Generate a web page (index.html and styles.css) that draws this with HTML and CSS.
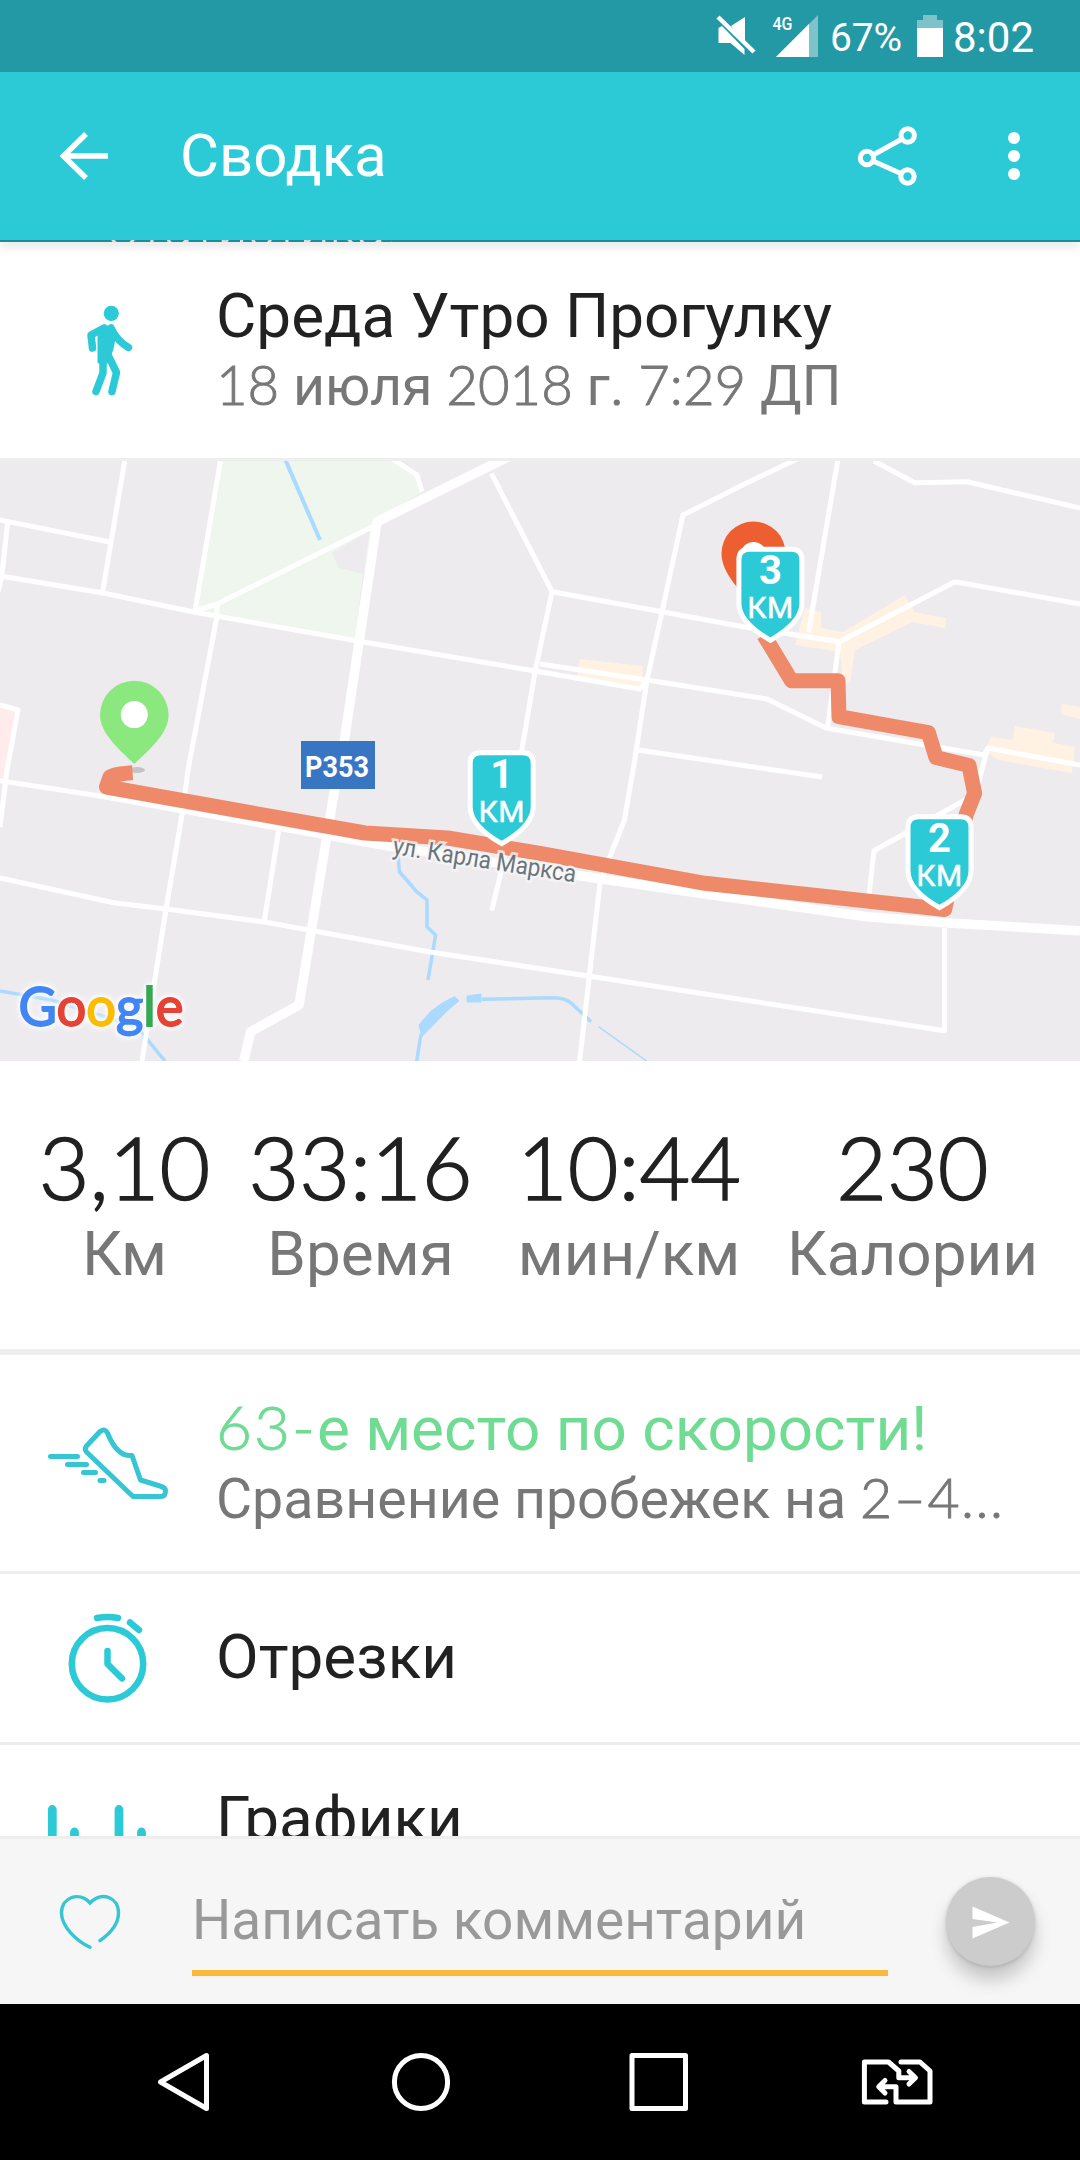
FILE: index.html
```html
<!DOCTYPE html>
<html lang="ru">
<head>
  <meta charset="utf-8">
  <title>Сводка</title>
  <link rel="stylesheet" href="styles.css">
</head>
<body>
  <div class="screen">

    <div class="status-bar">
      <svg class="status-icons" width="112" height="72" viewBox="712 0 112 72">
        <path d="M718.500 28v15h12l14 12v-6L722 26zM731 26l14-9v27z" fill="#fff"/>
        <path d="M718 17l36 35" stroke="#fff" stroke-width="4.500"/>
        <path d="M776 57l42-42v42z" fill="#7ec3ca"/>
        <path d="M776 57l33-33v33z" fill="#fff"/>
        <text class="net" x="772.500" y="30" textLength="20" lengthAdjust="spacingAndGlyphs">4G</text>
      </svg>
      <span class="percent">67%</span>
      <svg class="battery" width="26" height="72" viewBox="917 0 26 72">
        <path d="M923 15h14v5h6v37h-26V20h6z" fill="#7ec3ca"/>
        <path d="M917 28h26v29h-26z" fill="#fff"/>
      </svg>
      <span class="time">8:02</span>
    </div>

    <div class="app-bar">
      <svg class="back" width="180" height="168" viewBox="0 72 180 168">
        <path d="M108 156H64M86 134L63.500 156L86 178" fill="none" stroke="#fff" stroke-width="5.500"/>
      </svg>
      <h1>Сводка</h1>
      <svg width="240" height="168" viewBox="840 72 240 168" fill="none" stroke="#fff" stroke-width="5">
        <circle cx="907.700" cy="135.500" r="6.700"/>
        <circle cx="867" cy="158" r="6.700"/>
        <circle cx="907.500" cy="176.500" r="6.700"/>
        <path d="M873 155l29-16M873 161l29 13"/>
        <g fill="#fff" stroke="none">
          <circle cx="1014" cy="138" r="6"/>
          <circle cx="1014" cy="156" r="6"/>
          <circle cx="1014" cy="174" r="6"/>
        </g>
      </svg>
    </div>

    <div class="content">
      <div class="banner"><span>Статистика!</span></div>

      <div class="row activity">
        <svg width="216" height="216" viewBox="0 242 216 216" fill="none" stroke="#2ccad7" stroke-linecap="round" stroke-linejoin="round">
          <circle cx="111.300" cy="313.300" r="7.600" fill="#2ccad7" stroke="none"/>
          <path d="M99 333.500Q102 327 107 327Q112 327 115 333L112 349L107 362H99z" fill="#2ccad7" stroke-width="3"/>
          <path d="M104 328L91 335L92.500 348" stroke-width="7.500"/>
          <path d="M111 328Q117 341 128.500 347.500" stroke-width="7.500"/>
          <path d="M103 354V373L96 391.500M107 353L116.500 372.500L112 391.500" stroke-width="7.500"/>
        </svg>
        <div class="row-text">
          <div class="title">Среда Утро Прогулку</div>
          <div class="sub date"><span class="num">18</span> июля <span class="num">2018</span> г. <span class="num">7:29</span> ДП</div>
        </div>
      </div>

      <svg class="map" width="1080" height="600" viewBox="0 461 1080 600">
        <rect x="0" y="461" width="1080" height="600" fill="#edebee"/>
        <!-- парк и кварталы -->
        <path d="M220 461H393L417 475L422 492L374 522L363 572L355 640L195 612z" fill="#eef6ee"/>
        <path d="M332 553L370 530L363 574L339 568z" fill="#edebee"/>
        <path d="M0 705L18 710L9 765L0 785z" fill="#ffebeb"/>
        <g fill="#fff2e3">
          <path d="M580 659L643 666L641 689L577 676z"/>
          <path d="M805 608L821 612V628L843 632L905 595L914 612L946 618L945 628L912 622L855 650L850 683L843 683L840 652L795 645z"/>
          <path d="M991 737L1013 740L1015 726L1055 733L1053 743L1075 747L1072 773L998 760L985 750z"/>
          <path d="M1062 704L1080 707V719L1061 714z"/>
        </g>
        <!-- вода -->
        <g class="water">
          <path d="M285 459L320 540" stroke-width="4"/>
          <path d="M398 855L399.400 871.700L416.700 891.700L427 900V926.700L435.600 935L428 980"/>
          <path d="M421 1034L416.700 1061M482 999.300L540 998L554 997.700Q565 998 571 1003L591 1021.700"/>
          <path d="M598.500 1026.700L646.700 1061" stroke-width="1.500"/>
          <path d="M0 991L52 1000L137 1027L165 1061"/>
          <path d="M454.500 996.700L459 1000.700L447 1011L421.800 1036.700L419 1025L430.400 1011.700Q442 1002 454.500 996.700zM467 996L481 994V1002H467z" fill="#aadaff" stroke="#aadaff" stroke-width="1"/>
        </g>
        <!-- улицы -->
        <g class="roads">
          <path d="M124.700 461L102.600 592M0 520L108.500 541.700M7.600 523L1.700 577L-2 592"/>
          <path d="M0 576L103 593L195 612.300L365 642.300L535 671L640 689L647 680"/>
          <path d="M540 664L647 680L767 699L826 728L984 755L988 748L1080 765"/>
          <path d="M220.400 461L195 611L217 604L372 527M217 605V616L188 770L182.500 812L166 909L142 1061"/>
          <path d="M392.600 459L417 475L422 491.700M491.400 473.300L552 591.700L535 672L502 868L491.700 910.700"/>
          <path d="M552 591.700L662 611.700L743 626.700L839.600 641.700L955 581.700L1080 604"/>
          <path d="M797 459L746.600 483L683 515L662 611.700L647 680L634.700 760L624.400 820L610.600 855L600 883L579.600 1061"/>
          <path d="M838 459L808.600 632M874 461L914.700 482.700L967 481.700L1080 508M839 642L827.500 728M638 750L822 777"/>
          <path d="M987.700 748L975 795L962 801.700L874 850.700L869 895"/>
          <path d="M0 705L18 710L7 770L0 827M279 828L264.500 920"/>
          <path d="M0 878L113.600 902.700L166 909L264.500 922L430 952L588 976L944.600 1030.700V928"/>
          <path d="M0 780.700L100 796L182.500 811L327 837"/>
          <path d="M327 835L389 846L574.400 875L712 895L867 916.700L944.600 922.700L1080 930.700" stroke-width="9.500"/>
          <path d="M508 457L377 521.700L344.400 740L334 793L299 1005L250.700 1031.700L243.800 1061" stroke-width="9.500"/>
        </g>
        <ellipse cx="137" cy="770" rx="8" ry="3" fill="#c6c3c6"/>
        <path class="route" d="M132.600 772.700Q113 774 110 777L106.500 787L365 833L447.700 838L540 853.300L705 883.300L944.600 909.500L966 815L974.600 793.300L969 765.500L936 757.500L928.400 732.700L839 716.700L838 680.700H791.400L763.800 635"/>
        <text class="street" transform="translate(392 854) rotate(8.800)" textLength="185" lengthAdjust="spacingAndGlyphs">ул. Карла Маркса</text>

        <rect x="301" y="741" width="74" height="48" fill="#3876c4"/>
        <text class="road-no" x="305" y="777" textLength="64" lengthAdjust="spacingAndGlyphs">Р353</text>

        <!-- старт и финиш -->
        <path d="M134.300 764C121 751 100 734 100 715A34.300 34.300 0 0 1 168.600 715C168.600 734 148 751 134.300 764z" fill="#8be87e"/>
        <circle cx="134.300" cy="714.600" r="13.500" fill="#fff"/>
        <path d="M753.500 605C741 592 721.500 573 721.500 553.500A32 32 0 0 1 785.500 553.500C785.500 573 766 592 753.500 605z" fill="#ed5f30"/>
        <circle cx="753.500" cy="555" r="13" fill="#fff"/>

        <!-- километровые отметки -->
        <g transform="translate(501.700 846.700)">
          <path class="flag" d="M-21 -94H21Q31.500 -94 31.500 -83.500V-40C31.500 -24 14 -11 0 -3C-14 -11 -31.500 -24 -31.500 -40V-83.500Q-31.500 -94 -21 -94z"/>
          <text class="flag-num" x="0" y="-59">1</text>
          <text class="flag-km" x="0" y="-25">КМ</text>
        </g>
        <g transform="translate(939.500 910.700)">
          <path class="flag" d="M-21 -94H21Q31.500 -94 31.500 -83.500V-40C31.500 -24 14 -11 0 -3C-14 -11 -31.500 -24 -31.500 -40V-83.500Q-31.500 -94 -21 -94z"/>
          <text class="flag-num" x="0" y="-59">2</text>
          <text class="flag-km" x="0" y="-25">КМ</text>
        </g>
        <g transform="translate(770.400 643.300)">
          <path class="flag" d="M-21 -94H21Q31.500 -94 31.500 -83.500V-40C31.500 -24 14 -11 0 -3C-14 -11 -31.500 -24 -31.500 -40V-83.500Q-31.500 -94 -21 -94z"/>
          <text class="flag-num" x="0" y="-59">3</text>
          <text class="flag-km" x="0" y="-25">КМ</text>
        </g>

        <text class="google" x="18.500" y="1025.500" textLength="165" lengthAdjust="spacingAndGlyphs"><tspan class="blue">G</tspan><tspan class="red">o</tspan><tspan class="yellow">o</tspan><tspan class="blue">g</tspan><tspan class="lime">l</tspan><tspan class="red">e</tspan></text>
      </svg>

      <div class="stats">
        <div class="stat"><div class="value">3,10</div><div class="label">Км</div></div>
        <div class="stat"><div class="value">33:16</div><div class="label">Время</div></div>
        <div class="stat"><div class="value">10:44</div><div class="label">мин/км</div></div>
        <div class="stat"><div class="value">230</div><div class="label">Калории</div></div>
      </div>

      <div class="row place">
        <svg width="216" height="216" viewBox="0 1355 216 216" fill="none" stroke="#35c5d3" stroke-width="5" stroke-linecap="round" stroke-linejoin="round">
          <path d="M100 1431.500L86.500 1446Q84 1449 86.500 1452L133 1496.500H161Q165.500 1496.500 165.500 1490.500Q165.500 1487.500 160 1486L140.500 1480L132 1455.500Q117 1457 107.500 1433Q105 1428 100 1431.500z"/>
          <path d="M50.500 1456.500H77.500M67.500 1464.500H86.500M83.500 1472.500H95.500M100 1480.500H104"/>
        </svg>
        <div class="row-text">
          <div class="title green"><span class="num">63-</span>е место по скорости!</div>
          <div class="sub">Сравнение пробежек на <span class="num wide">2–4...</span></div>
        </div>
      </div>

      <div class="row splits">
        <svg width="216" height="168" viewBox="0 1574 216 168" fill="none" stroke="#2ccad7" stroke-width="6.500" stroke-linecap="round" stroke-linejoin="round">
          <circle cx="107.500" cy="1663.700" r="35.700"/>
          <path d="M97 1618Q107.500 1616 118 1618M130 1622.500L139 1630M107.500 1651V1664L122 1678.500"/>
        </svg>
        <div class="row-text"><div class="title">Отрезки</div></div>
      </div>

      <div class="row charts">
        <svg width="216" height="168" viewBox="0 1745 216 168" stroke="#2ccad7" stroke-width="8.800" stroke-linecap="round">
          <path d="M52.300 1809.500V1860M74.500 1832V1860M119 1809.500V1860M141.500 1832V1860"/>
        </svg>
        <div class="row-text"><div class="title">Графики</div></div>
      </div>
    </div>

    <div class="comment-bar">
      <svg width="192" height="165" viewBox="0 1839 192 165" fill="none" stroke="#35c5d3" stroke-width="3.400" stroke-linecap="round">
        <path d="M90 1947.300C77 1941 61.500 1927 61.500 1913C61.500 1897 79 1891 90 1903C102 1891 118.500 1897 118.500 1913C118.500 1925 108 1935 99.900 1940.700"/>
      </svg>
      <input class="comment" type="text" placeholder="Написать комментарий">
      <button class="send">
        <svg width="89" height="89" viewBox="945.500 1876.500 89 89">
          <path d="M972 1906L1009 1922L972 1938V1926.500L997 1922L972 1918.500z" fill="#fff"/>
        </svg>
      </button>
    </div>

    <div class="nav-bar">
      <svg width="238" height="156" viewBox="64 2004 238 156"><path d="M160.500 2082L206.500 2055.500V2108.500z"/></svg>
      <svg width="238" height="156" viewBox="302 2004 238 156"><circle cx="421" cy="2082" r="26.600"/></svg>
      <svg width="238" height="156" viewBox="540 2004 238 156"><rect x="632" y="2055.500" width="53.500" height="53"/></svg>
      <svg width="238" height="156" viewBox="778 2004 238 156">
        <path d="M886 2102H864.400V2062H888.500L898.800 2071V2077.700H915M909 2071.500L915.500 2077.700L909 2084"/>
        <path d="M901 2062H920L930 2071V2102H896V2086.700H879M885 2080.500L878.700 2086.700L885 2093"/>
      </svg>
    </div>

  </div>
</body>
</html>
```

FILE: styles.css
```css
* {
  box-sizing: border-box;
}
body {
  margin: 0;
  font-family: Roboto, "Noto Sans", sans-serif;
  background-color: #fff;
}
svg {
  display: block;
  flex: none;
}
.screen {
  display: flex;
  flex-direction: column;
  width: 1080px;
  height: 2160px;
  overflow: hidden;
}

/* barra superior */
.status-bar {
  display: flex;
  flex: none;
  align-items: center;
  justify-content: flex-end;
  height: 72px;
  padding-right: 45px;
  background-color: #2499a6;
  color: #fff;
}
.net {
  font-size: 18px;
  font-weight: 500;
  fill: #fff;
}
.percent {
  width: 72px;
  margin-left: 6px;
  padding-top: 3px;
  font-size: 39px;
  line-height: 72px;
  letter-spacing: -0.2px;
}
.battery {
  margin-left: 15px;
}
.time {
  width: 82px;
  margin-left: 10px;
  padding-top: 3px;
  font-size: 42px;
  line-height: 72px;
}
.app-bar {
  display: flex;
  flex: none;
  align-items: center;
  height: 168px;
  background-color: #2ccad7;
  color: #fff;
}
.app-bar h1 {
  flex: 1;
  margin: 0;
  font-size: 60px;
  font-weight: 400;
  line-height: 70px;
}

/* contenido */
.content {
  flex: 1;
  min-height: 0;
  overflow: hidden;
}
.banner {
  position: relative;
  z-index: 1;
  height: 2px;
  background-color: #1e8c96;
  box-shadow: 0 2px 10px rgba(0, 0, 0, 0.4);
}
.banner span {
  display: flex;
  align-items: flex-end;
  height: 2px;
  padding-left: 105px;
  overflow: hidden;
  color: #d5dfe0;
  font-size: 53px;
  font-weight: 300;
  line-height: 28px;
}
.row {
  display: flex;
  height: 219px;
  border-bottom: 3px solid #eee;
}
.row-text {
  padding-top: 38px;
}
.title {
  font-size: 62px;
  line-height: 71px;
  color: #212121;
  white-space: nowrap;
}
.sub {
  font-size: 55.5px;
  line-height: 72px;
  color: #777;
  white-space: nowrap;
}
.green {
  color: #6fdb93;
}
.num {
  font-family: Lato, Roboto, sans-serif;
  font-weight: 300;
  line-height: 0;
  -webkit-text-stroke: 0.9px;
}
.green .num {
  letter-spacing: 2px;
}
.date .num {
  font-size: 54.5px;
}
.wide {
  letter-spacing: 1.5px;
}
.splits {
  height: 171px;
}
.splits .row-text {
  padding-top: 47px;
}
.map .roads {
  fill: none;
  stroke: #fff;
  stroke-width: 5;
  stroke-linejoin: round;
}
.map .water {
  fill: none;
  stroke: #aadaff;
  stroke-width: 3.5;
}
.route {
  fill: none;
  stroke: #ee8a6a;
  stroke-width: 15;
  stroke-linejoin: round;
}
.street {
  font-size: 25px;
  fill: #68757c;
  stroke: #f7f5f8;
  stroke-opacity: 0.8;
  stroke-width: 5;
  paint-order: stroke;
}
.road-no {
  font-size: 30px;
  font-weight: 700;
  fill: #fff;
}
.flag {
  fill: #2ccad7;
  stroke: #fff;
  stroke-width: 5;
}
.flag-num,
.flag-km {
  fill: #fff;
  text-anchor: middle;
}
.flag-num {
  font-size: 40px;
  font-weight: 700;
}
.flag-km {
  font-size: 30px;
  font-weight: 400;
  letter-spacing: 0.5px;
  stroke: #fff;
  stroke-width: 0.5;
}
.google {
  font-family: Lato, Roboto, sans-serif;
  font-size: 54px;
  font-weight: 400;
  stroke-width: 1.8;
  filter: drop-shadow(0 0 2px #fff) drop-shadow(0 0 3px #fff);
}
.blue {
  fill: #4285f4;
  stroke: #4285f4;
}
.red {
  fill: #e54335;
  stroke: #e54335;
}
.yellow {
  fill: #fbbc05;
  stroke: #fbbc05;
}
.lime {
  fill: #34a853;
  stroke: #34a853;
}
.stats {
  display: grid;
  grid-template-columns: 159px 215px 224px 245px;
  gap: 49px;
  justify-content: center;
  height: 294px;
  padding-top: 57px;
  border-bottom: 6px solid #eee;
}
.stat {
  display: flex;
  flex-direction: column;
  align-items: center;
  white-space: nowrap;
}
.value {
  font-family: Lato, Roboto, sans-serif;
  font-size: 87.5px;
  font-weight: 300;
  line-height: 98px;
  color: #212121;
  -webkit-text-stroke: 1.6px;
}
.label {
  margin-top: 2px;
  font-size: 62px;
  line-height: 71px;
  color: #777;
}

/* comentario */
.comment-bar {
  display: flex;
  flex: none;
  height: 168px;
  border-top: 3px solid #eee;
  background-color: #f6f6f6;
}
.comment {
  width: 696px;
  height: 101px;
  margin-top: 36px;
  padding: 0 0 6px;
  border: none;
  border-bottom: 6px solid #fcb837;
  outline: none;
  background: none;
  font-family: Roboto, sans-serif;
  font-size: 55px;
}
.comment::placeholder {
  color: #999;
  opacity: 1;
}
.send {
  width: 89px;
  height: 89px;
  margin: 37.5px 0 0 57.5px;
  padding: 0;
  border: none;
  border-radius: 50%;
  background-color: #ccc;
  box-shadow: 0 14px 18px rgba(0, 0, 0, 0.2), 0 1px 4px rgba(0, 0, 0, 0.15);
}
.nav-bar {
  display: flex;
  flex: none;
  justify-content: center;
  height: 156px;
  background-color: #000;
  fill: none;
  stroke: #fff;
  stroke-width: 5;
  stroke-linecap: round;
  stroke-linejoin: round;
}
```
